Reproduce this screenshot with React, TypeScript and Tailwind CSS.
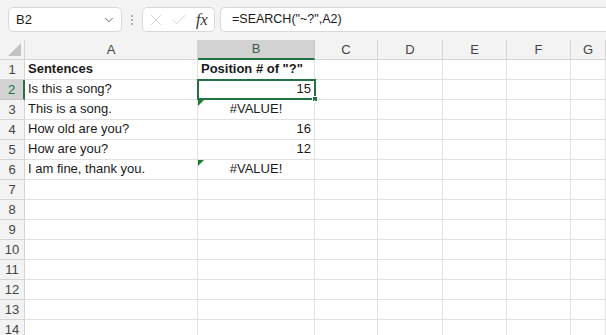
import { ChevronDown, X, Check } from 'lucide-react';

const cols = ['A', 'B', 'C', 'D', 'E', 'F', 'G'];
const widths = ['w-[173px]', 'w-[117px]', 'w-[63px]', 'w-[65px]', 'w-[64px]', 'w-[64px]', 'flex-1'];

type Row = { a?: string; b?: string; bold?: boolean; align?: 'left' | 'center' | 'right'; flag?: boolean };

const rows: Row[] = [
  { a: 'Sentences', b: 'Position # of "?"', bold: true, align: 'left' },
  { a: 'Is this a song?', b: '15', align: 'right' },
  { a: 'This is a song.', b: '#VALUE!', align: 'center', flag: true },
  { a: 'How old are you?', b: '16', align: 'right' },
  { a: 'How are you?', b: '12', align: 'right' },
  { a: 'I am fine, thank you.', b: '#VALUE!', align: 'center', flag: true },
  {}, {}, {}, {}, {}, {}, {}, {},
];

const App = () => {
  return (
    <div className="w-[606px] h-[335px] overflow-hidden bg-white text-[#1a1a1a] font-['Liberation_Sans',Arial,sans-serif]">
      {/* formula bar */}
      <div className="h-[40px] bg-[#f3f3f3] flex items-start pt-[7px] pl-[8px]">
        <div className="w-[114px] h-[25px] bg-white border border-[#d9d9d9] rounded-[5px] flex items-center pl-[7px] pr-[5px] text-[13px]">
          <span className="flex-1">B2</span>
          <ChevronDown size={14} strokeWidth={1.5} className="text-[#555]" />
        </div>
        <div className="w-[20px] h-[25px] flex flex-col items-center justify-center gap-[2px]">
          <span className="w-[2px] h-[2px] bg-[#999] rounded-full" />
          <span className="w-[2px] h-[2px] bg-[#999] rounded-full" />
          <span className="w-[2px] h-[2px] bg-[#999] rounded-full" />
        </div>
        <div className="w-[73px] h-[25px] bg-white border border-[#d9d9d9] rounded-[5px] flex items-center pl-[4px] gap-[5px]">
          <X size={18} strokeWidth={1} className="text-[#c2c2c2]" />
          <Check size={18} strokeWidth={1} className="text-[#c2c2c2]" />
          <span className="ml-[3px] text-[16px] italic font-['Liberation_Serif',serif] text-[#333]">fx</span>
        </div>
        <div className="ml-[5px] flex-1 h-[25px] bg-white border border-[#d9d9d9] border-r-0 rounded-l-[5px] flex items-center pl-[11px] text-[12.5px]">
          =SEARCH("~?",A2)
        </div>
      </div>

      {/* column headers */}
      <div className="flex h-[20px] bg-[#f3f3f3] text-[13px] text-[#444]">
        <div className="w-[25px] border-r border-b border-[#d4d4d4] relative">
          <div className="absolute right-[3px] bottom-[3px] w-0 h-0 border-l-[13px] border-l-transparent border-b-[13px] border-b-[#c3c3c3]" />
        </div>
        {cols.map((c, i) => (
          <div
            key={c}
            className={`${widths[i]} flex items-center justify-center ${
              c === 'B'
                ? 'bg-[#d2d2d2] border-b-2 border-b-[#217346] border-r border-r-[#c6c6c6] text-[#3d5c4a]'
                : 'border-r border-b border-[#d4d4d4]'
            }`}
          >
            {c}
          </div>
        ))}
      </div>

      {/* grid rows */}
      {rows.map((r, idx) => {
        const n = idx + 1;
        const sel = n === 2;
        return (
          <div key={n} className="flex h-[20px] text-[13px]">
            <div
              className={`w-[25px] flex items-center justify-center ${
                sel
                  ? 'bg-[#d2d2d2] text-[#217346] border-r-2 border-r-[#217346] border-b border-b-[#c6c6c6]'
                  : 'bg-[#f3f3f3] text-[#444] border-r border-b border-[#d4d4d4]'
              }`}
            >
              {n}
            </div>
            <div className={`${widths[0]} border-r border-b border-[#e1e1e1] flex items-end pb-[1px] pl-[3px] whitespace-nowrap ${r.bold ? 'font-bold' : ''}`}>
              {r.a}
            </div>
            <div
              className={`${widths[1]} relative border-r border-b border-[#e1e1e1] flex items-end pb-[1px] px-[3px] whitespace-nowrap ${
                r.bold ? 'font-bold' : ''
              } ${r.align === 'right' ? 'justify-end' : r.align === 'center' ? 'justify-center' : 'justify-start'}`}
            >
              {r.b}
              {r.flag && (
                <div className="absolute left-0 top-0 w-0 h-0 border-t-[6px] border-t-[#1e7b34] border-r-[6px] border-r-transparent" />
              )}
              {sel && (
                <div className="absolute -left-[1px] -top-[1px] w-[119px] h-[21px] border-2 border-[#217346]">
                  <div className="absolute -right-[4px] -bottom-[4px] w-[6px] h-[6px] bg-[#217346] border border-white" />
                </div>
              )}
            </div>
            {widths.slice(2).map((w, i) => (
              <div key={i} className={`${w} border-r border-b border-[#e1e1e1]`} />
            ))}
          </div>
        );
      })}
    </div>
  );
};

export default App;
